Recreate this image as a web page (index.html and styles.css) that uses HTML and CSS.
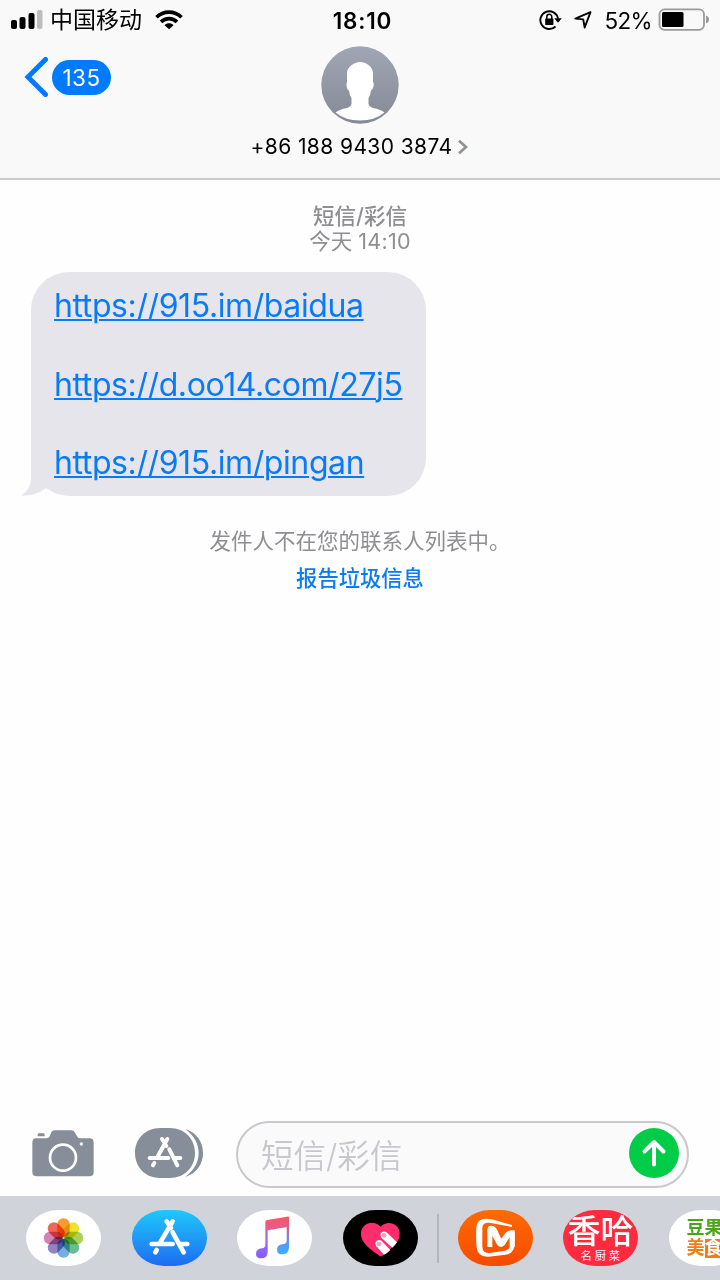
FILE: index.html
```html
<!DOCTYPE html>
<html lang="zh-CN">
<head>
<meta charset="utf-8">
<title>短信</title>
<link rel="stylesheet" href="styles.css">
</head>
<body>
<div class="screen">
  <header class="header">
    <div class="status">
      <div class="status-side">
        <svg class="signal" width="32" height="20" viewBox="0 0 32 20"><rect x="0" y="10" width="6" height="9" rx="2"/><rect x="8.5" y="7" width="6" height="12" rx="2"/><rect x="17.5" y="3" width="6" height="16" rx="2"/><rect x="26" y="0" width="5.5" height="19" rx="2" fill="#bdbdbd"/></svg>
        <span class="carrier">中国移动</span>
        <svg class="wifi" width="28" height="20" viewBox="0 0 28 20" fill="none" stroke="#000" stroke-width="3.7"><path d="M1.500 7.200C8.500.3 19.500.3 26.500 7.200"/><path d="M6 11.900C10.500 7.500 17.500 7.500 22 11.900"/><path d="M9.500 15.300C12 12.700 16 12.700 18.500 15.300L14 19.300Z" fill="#000" stroke="none"/></svg>
      </div>
      <span class="clock">18:10</span>
      <div class="status-side status-right">
        <svg width="24" height="22" viewBox="0 0 24 22"><path d="M16.500 17.500A8.900 8.900 0 1 1 19 9.500" fill="none" stroke="#000" stroke-width="1.900"/><path d="M15.300 9.200H22.800L19 13.700Z"/><rect x="6.200" y="9.500" width="8.200" height="6.500" rx=".7"/><path d="M7.800 10V7.800a2.500 2.500 0 0 1 5 0V10" fill="none" stroke="#000" stroke-width="1.500"/></svg>
        <svg class="location" width="18" height="18" viewBox="0 0 18 18" fill="none" stroke="#000" stroke-width="1.900" stroke-linejoin="round"><path d="M1.300 7.600 16.500 1.200 10.700 16.500 9.200 8.400Z"/></svg>
        <span class="percent">52%</span>
        <svg class="battery" width="52" height="24" viewBox="0 0 52 24"><rect x="1.500" y="1.300" width="44.500" height="20.500" rx="5" fill="none" stroke="#9a9a9a" stroke-width="1.800"/><rect x="4" y="4" width="21.500" height="15" rx="1.500"/><path d="M48 7.500q3 1.200 3 4t-3 4Z" fill="#9a9a9a"/></svg>
      </div>
    </div>
    <div class="nav">
      <div class="back">
        <svg width="24" height="40" viewBox="0 0 24 40"><path d="M21.500 2.500 4 20 21.500 37.500" fill="none" stroke="#007aff" stroke-width="5" stroke-linecap="round" stroke-linejoin="miter"/></svg>
        <span class="count">135</span>
      </div>
      <div class="contact">
        <svg class="avatar" width="78" height="78" viewBox="0 0 78 78"><defs><linearGradient id="avatar-bg" x2="0" y2="1"><stop stop-color="#a1a6b4"/><stop offset="1" stop-color="#858996"/></linearGradient></defs><circle cx="39" cy="39" r="38.700" fill="url(#avatar-bg)"/><path d="M39 16C45 16 51.500 20 52 27V36Q53.300 37 52.300 41Q51.800 44 50 44.500Q49.500 49 47.500 52V58Q48 60.500 52 62Q60 63.500 63.500 66.500Q54 74.500 39 74.500T14.500 66.500Q18 63.500 26 62Q30 60.500 30.500 58V52Q28.500 49 28 44.500Q26 44 25.700 40.500Q25.200 37 26 36V27C26 21 33 16 39 16Z" fill="#fff"/></svg>
        <div class="number-row"><span class="number">+86 188 9430 3874</span><svg class="chevron" width="12" height="16" viewBox="0 0 12 16"><path d="m2 1.800 7 6.200-7 6.200" fill="none" stroke="#8d929b" stroke-width="2.700"/></svg></div>
      </div>
    </div>
  </header>

  <main class="thread">
    <div class="stamp"><div class="stamp-kind">短信/彩信</div><div>今天 <span class="stamp-time">14:10</span></div></div>
    <div class="bubble">
      <svg class="tail" width="44" height="50" viewBox="0 0 44 50"><path d="M10 0V32Q10 44 0 49.500Q14 50 23 43.500L44 30V0Z" fill="#e5e5eb"/></svg>
      <a class="link">https://915.im/baidua</a>
      <a class="link">https://d.oo14.com/27j5</a>
      <a class="link">https://915.im/pingan</a>
    </div>
    <div class="notice">发件人不在您的联系人列表中。</div>
    <div class="report">报告垃圾信息</div>
  </main>

  <div class="composer">
    <svg class="camera" width="62" height="47" viewBox="97 59 186 141"><path fill="#868e99" d="M109 84H141Q149 83 151 76L155 66Q158 60 166 60H214Q222 60 226 67L231 76Q235 84 242 84H270Q282 84 282 97V185Q282 198 269 198H111Q98 198 98 185V97Q98 84 109 84ZM114 78V73Q114 69 118 69H131Q135 69 135 73V78Z"/><circle cx="190" cy="142" r="39" fill="none" stroke="#fff" stroke-width="8"/><circle cx="245" cy="101" r="5" fill="#fff"/></svg>
    <svg class="apps-button" width="68" height="50" viewBox="405 54 204 150"><path fill="#868e99" d="M481 54H509C556 54 585 89 585 129S556 204 509 204H481C434 204 405 169 405 129S434 54 481 54ZM556 57C591 68 609 97 609 129S591 190 556 201C583 180 596 156 596 129S583 78 556 57Z"/><g fill="none" stroke="#fff" stroke-width="12" stroke-linecap="round"><path d="M449 144H505M522 144H541M502 87 474 138M486 87 499 108M508 118 532 166M463 159 459 166"/></g></svg>
    <div class="input"><span class="placeholder">短信/彩信</span>
      <svg width="50" height="50" viewBox="0 0 50 50"><circle cx="25" cy="25" r="25" fill="#00cc47"/><path d="M25 36.500V14M15.500 23.500 25 14l9.500 9.500" fill="none" stroke="#fff" stroke-width="4" stroke-linecap="round" stroke-linejoin="round"/></svg>
    </div>
  </div>

  <div class="drawer">
    <div class="app">
      <svg width="75" height="56" viewBox="-112.500 -84 225 168"><g class="petals"><rect x="-18.500" y="-59" width="37" height="57" rx="18" fill="#f79c2c"/><rect x="-18.500" y="-59" width="37" height="57" rx="18" fill="#eee329" transform="rotate(45)"/><rect x="-18.500" y="-59" width="37" height="57" rx="18" fill="#acd157" transform="rotate(90)"/><rect x="-18.500" y="-59" width="37" height="57" rx="18" fill="#68bd91" transform="rotate(135)"/><rect x="-18.500" y="-59" width="37" height="57" rx="18" fill="#75aee0" transform="rotate(180)"/><rect x="-18.500" y="-59" width="37" height="57" rx="18" fill="#9284bf" transform="rotate(225)"/><rect x="-18.500" y="-59" width="37" height="57" rx="18" fill="#d282b3" transform="rotate(270)"/><rect x="-18.500" y="-59" width="37" height="57" rx="18" fill="#f16657" transform="rotate(315)"/></g></svg>
    </div>
    <div class="app app-store">
      <svg width="75" height="56" viewBox="394 300 225 168" fill="none" stroke="#fff" stroke-width="14" stroke-linecap="round"><path d="M453 402H516M538 402H560M516 334 477 400M498 334 511 354M516 367 549 427M468 420 464 427"/></svg>
    </div>
    <div class="app">
      <svg width="75" height="56" viewBox="51 300 225 168"><defs><linearGradient id="note" x1="0" y1="445" x2="0" y2="320" gradientUnits="userSpaceOnUse"><stop stop-color="#8b5cff"/><stop offset=".3" stop-color="#8a6bfa"/><stop offset=".7" stop-color="#e25f91"/><stop offset="1" stop-color="#fb5566"/></linearGradient><linearGradient id="note-blue" x2="0" y2="1"><stop stop-color="#fb5566"/><stop offset=".3" stop-color="#df5e8c"/><stop offset=".65" stop-color="#5d91f2"/><stop offset="1" stop-color="#3bb1fb"/></linearGradient></defs><path fill="url(#note)" d="M136 335Q137 331 142 330L201 320Q207 319 207 324V350L143 361V425Q142 445 124 445Q108 445 108 431Q108 417 126 415Q136 414 136 404Z"/><path fill="url(#note-blue)" d="M200 322Q207 318 207 325V412Q207 433 187 433Q171 433 171 419Q171 405 187 403Q200 402 200 392Z"/></svg>
    </div>
    <div class="app app-heart">
      <svg width="75" height="56" viewBox="368 300 225 168"><path fill="#ff2d6d" d="M481 350C459 327 422 340 422 371C422 402 459 423 478 438Q482 441 486 437C513 416 539 398 538 369C536 339 500 330 481 350Z"/><g fill="#fff"><path d="M483 383Q477 373 484 367Q491 361 500 368L530 397Q525 406 516 413ZM468 409Q462 399 469 393Q477 387 485 394L510 420Q501 430 491 434Z"/></g><circle cx="491" cy="376" r="7" fill="#ff9ab5"/><circle cx="476" cy="402" r="7" fill="#ff9ab5"/></svg>
    </div>
    <div class="divider"></div>
    <div class="app app-mango">
      <svg width="75" height="56" viewBox="83 300 225 168"><path fill="#fff" fill-rule="evenodd" d="M245 345 184 328Q139 319 138 354Q136 384 139 412Q141 442 175 440L225 434Q253 430 253 401V363L241 372V402Q241 418 224 422L178 429Q157 430 156 410V356Q155 337 177 338L245 351Z"/><path fill="#fff" d="M171 410V360Q171 346 184 347Q195 348 201 361L213 386L226 368Q234 359 253 361V411L238 414V382L223 405Q209 419 199 402L186 377V412Z"/></svg>
    </div>
    <div class="app app-xiangha">
      <div class="xiangha-name">香哈</div><div class="xiangha-sub">名厨菜</div>
    </div>
    <div class="app app-douguo">
      <div class="douguo-line">豆果</div><div class="douguo-line douguo-orange">美<span class="douguo-box">食</span></div>
    </div>
  </div>
</div>
</body>
</html>
```

FILE: styles.css
```css
* { box-sizing: border-box; }
body { margin: 0; background: #fff; }
svg { display: block; flex: none; }
.screen {
  width: 720px; height: 1280px; overflow: hidden;
  display: flex; flex-direction: column;
  background: #fefefe; color: #000;
  font-family: Inter, "Noto Sans CJK SC", sans-serif;
  white-space: nowrap;
}

.header { height: 180px; background: #f9f9f9; border-bottom: 2px solid #cbcbcd; }
.status { height: 40px; display: grid; grid-template-columns: 1fr auto 1fr; align-items: center; padding: 0 10px 0 11px; font-size: 22px; }
.status-side { display: flex; align-items: center; }
.status-right { justify-content: flex-end; }
.carrier { margin-left: 7px; font-size: 23px; line-height: 40px; }
.wifi { margin-left: 13px; }
.clock { font-weight: 600; font-size: 22.500px; letter-spacing: 0.8px; margin-left: 4px; }
.location { margin-left: 11px; }
.percent { margin-left: 13px; font-size: 22.500px; letter-spacing: -0.7px; }
.battery { margin-left: 6px; }

.nav { height: 138px; display: grid; grid-template-columns: 250px 220px 250px; }
.back { display: flex; align-items: center; height: 40px; margin: 17px 0 0 24px; gap: 4px; }
.count { width: 59px; height: 35px; border-radius: 18px; background: #007aff; color: #fff; font-size: 22.500px; line-height: 35px; letter-spacing: 0.5px; text-align: center; }
.contact { display: flex; flex-direction: column; align-items: center; padding-top: 6px; }
.number-row { display: flex; align-items: center; height: 28px; margin-top: 8px; }
.number { font-size: 21px; letter-spacing: 0.4px; }
.chevron { margin: 2px 0 0 5px; }

.thread { flex: 1; display: flex; flex-direction: column; align-items: center; padding-top: 24px; }
.stamp { height: 50px; font-size: 21.500px; line-height: 25px; color: #8e8e93; text-align: center; }
.stamp-kind { font-weight: 500; }
.stamp-time { letter-spacing: 0.3px; }
.bubble { position: relative; align-self: flex-start; width: 395px; height: 224px; margin: 18px 0 0 31px; padding: 14px 23px; border-radius: 38px; background: #e5e5eb; display: flex; flex-direction: column; gap: 39.500px; }
.tail { position: absolute; left: -10px; bottom: 0; }
.link { position: relative; align-self: flex-start; height: 39px; line-height: 39px; font-size: 32px; letter-spacing: -0.4px; color: #087bf5; text-decoration: underline; text-decoration-thickness: 2px; text-underline-offset: 2px; }
.notice { margin-top: 30px; height: 30px; line-height: 30px; font-size: 21.500px; color: #8e8e93; }
.report { margin-top: 7px; height: 30px; line-height: 30px; font-size: 21.300px; font-weight: 500; color: #087bf5; }

.composer { height: 75px; display: flex; align-items: flex-start; padding-left: 32px; }
.camera { margin-top: 9px; }
.apps-button { margin: 7px 0 0 41px; }
.input { width: 453px; height: 67px; margin-left: 33px; border: 2px solid #c8c8cd; border-radius: 34px; background: #fafafa; display: flex; align-items: center; justify-content: space-between; padding: 0 8px 3px 23px; }
.placeholder { font-size: 32.500px; font-weight: 350; color: #c7c7cc; }

.drawer { height: 84px; background: #d0d3d9; display: flex; padding: 14px 0 0 26px; }
.app { flex: none; width: 75px; height: 56px; margin-right: 30.500px; border-radius: 32px / 28px; background: #fff; overflow: hidden; }
.petals rect { mix-blend-mode: multiply; }
.app-store { background: linear-gradient(#1fc8fb, #1d6cf2); }
.app-heart { background: #000; margin-right: 19px; }
.divider { flex: none; width: 2px; height: 49px; margin: 4px 19px 0 0; background: #b4b6bb; }
.app-mango { background: linear-gradient(#ff6a00, #f64b00); }
.app-xiangha { background: #fc2b40; color: #fff; text-align: center; }
.xiangha-name { height: 39px; line-height: 43px; font-size: 33px; font-weight: 500; }
.xiangha-sub { height: 14px; line-height: 14px; font-size: 11.500px; letter-spacing: 2.500px; padding-left: 2px; }
.app-douguo { padding: 8px 0 0 18px; }
.douguo-line { height: 20px; line-height: 20px; font-size: 18px; font-weight: 700; color: #48a51c; }
.douguo-orange { color: #ef7d1a; }
.douguo-box { display: inline-block; height: 19px; line-height: 18px; background: #ef7d1a; color: #fff; }
```
